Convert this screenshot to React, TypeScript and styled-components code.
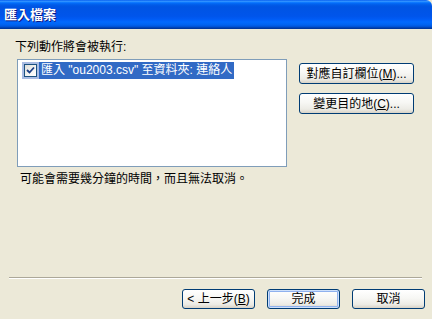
import React from 'react';
import styled, { createGlobalStyle } from 'styled-components';

const GlobalStyle = createGlobalStyle`
  html, body {
    margin: 0;
    padding: 0;
    background: #ece9d8;
  }
  body {
    font-family: "Liberation Sans", "Noto Sans CJK TC", sans-serif;
    font-size: 12px;
    color: #000;
  }
`;

const Window = styled.div`
  width: 432px;
  height: 319px;
  display: flex;
  flex-direction: column;
  background: #ece9d8;
  overflow: hidden;
`;

const TitleBar = styled.div`
  height: 29px;
  flex: none;
  display: flex;
  align-items: center;
  padding-left: 4px;
  border-top-right-radius: 6px;
  background: linear-gradient(
    180deg,
    #0058ee 0%,
    #3593ff 4%,
    #288eff 6%,
    #127dff 8%,
    #036ffc 10%,
    #0262ee 14%,
    #0057e5 20%,
    #0054e3 24%,
    #0055eb 56%,
    #005bf5 66%,
    #026afe 76%,
    #0062ef 86%,
    #0052d6 92%,
    #0040ab 96%,
    #003092 100%
  );
`;

const Title = styled.span`
  color: #fff;
  font-weight: bold;
  font-size: 13px;
  line-height: 15px;
  text-shadow: 1px 1px 0 #0a1883;
`;

const Content = styled.div`
  flex: 1;
  display: flex;
  padding: 11px 0 0 15px;
`;

const LeftColumn = styled.div`
  width: 272px;
  display: flex;
  flex-direction: column;
`;

const Label = styled.div`
  line-height: 14px;
  height: 14px;
`;

const ListBox = styled.div`
  margin: 5px 0 0 2px;
  width: 270px;
  height: 108px;
  box-sizing: border-box;
  border: 1px solid #7f9db9;
  background: #fff;
  padding: 2px 4px;
`;

const ListItem = styled.div`
  display: flex;
  align-items: stretch;
  height: 17px;
`;

const CheckCell = styled.div`
  width: 17px;
  display: flex;
  align-items: center;
  justify-content: center;
  background: #a9bce3;
`;

const CheckBox = styled.div`
  width: 11px;
  height: 11px;
  border: 1px solid #1c5180;
  background: linear-gradient(135deg, #dcdcd7 0%, #f6f6f4 60%, #fff 100%);
  display: flex;
  align-items: center;
  justify-content: center;
`;

const ItemText = styled.span<{ selected?: boolean }>`
  display: flex;
  align-items: center;
  padding: 0 2px;
  white-space: nowrap;
  line-height: 17px;
  background: ${({ selected }) => (selected ? '#316ac5' : 'transparent')};
  color: ${({ selected }) => (selected ? '#fff' : '#000')};
`;

const Note = styled.div`
  margin-top: 5px;
  padding-left: 5px;
  line-height: 14px;
`;

const RightColumn = styled.div`
  margin-left: 12px;
  padding-top: 23px;
  display: flex;
  flex-direction: column;
  gap: 9px;
`;

const Button = styled.button<{ w: number; h: number; isDefault?: boolean }>`
  width: ${({ w }) => w}px;
  height: ${({ h }) => h}px;
  box-sizing: border-box;
  padding: 0;
  margin: 0;
  font-family: "Liberation Sans", "Noto Sans CJK TC", sans-serif;
  font-size: 12px;
  line-height: 14px;
  color: #000;
  border: 1px solid #003c74;
  border-radius: 3px;
  background: linear-gradient(180deg, #ffffff 0%, #f7f7f4 45%, #ecebe5 80%, #d8d2c6 100%);
  box-shadow: ${({ isDefault }) =>
    isDefault ? 'inset 0 0 0 1px #cde0fb, inset 0 0 0 2px #8fb1ee' : 'none'};
  cursor: default;
`;

const Footer = styled.div`
  flex: none;
  display: flex;
  flex-direction: column;
  padding-bottom: 10px;
`;

const Separator = styled.div`
  margin: 0 10px 0 9px;
  height: 0;
  border-top: 1px solid #aca899;
  border-bottom: 1px solid #fff;
`;

const ButtonRow = styled.div`
  margin-top: 10px;
  display: flex;
  justify-content: flex-end;
  gap: 12px;
  padding-right: 7px;
`;

const U = styled.span`
  text-decoration: underline;
`;

const CheckMark = () => (
  <svg width="9" height="9" viewBox="0 0 9 9">
    <path d="M1 4 L3.5 6.5 L8 1.5" fill="none" stroke="#1c3f86" strokeWidth="1.8" />
  </svg>
);

export default function App() {
  return (
    <>
      <GlobalStyle />
      <Window>
        <TitleBar>
          <Title>匯入檔案</Title>
        </TitleBar>
        <Content>
          <LeftColumn>
            <Label>下列動作將會被執行:</Label>
            <ListBox>
              <ListItem>
                <CheckCell>
                  <CheckBox>
                    <CheckMark />
                  </CheckBox>
                </CheckCell>
                <ItemText selected>匯入 "ou2003.csv" 至資料夾: 連絡人</ItemText>
              </ListItem>
            </ListBox>
            <Note>可能會需要幾分鐘的時間，而且無法取消。</Note>
          </LeftColumn>
          <RightColumn>
            <Button w={115} h={21}>
              對應自訂欄位(<U>M</U>)...
            </Button>
            <Button w={115} h={21}>
              變更目的地(<U>C</U>)...
            </Button>
          </RightColumn>
        </Content>
        <Footer>
          <Separator />
          <ButtonRow>
            <Button w={73} h={20}>
              &lt; 上一步(<U>B</U>)
            </Button>
            <Button w={73} h={20} isDefault>
              完成
            </Button>
            <Button w={73} h={20}>
              取消
            </Button>
          </ButtonRow>
        </Footer>
      </Window>
    </>
  );
}
